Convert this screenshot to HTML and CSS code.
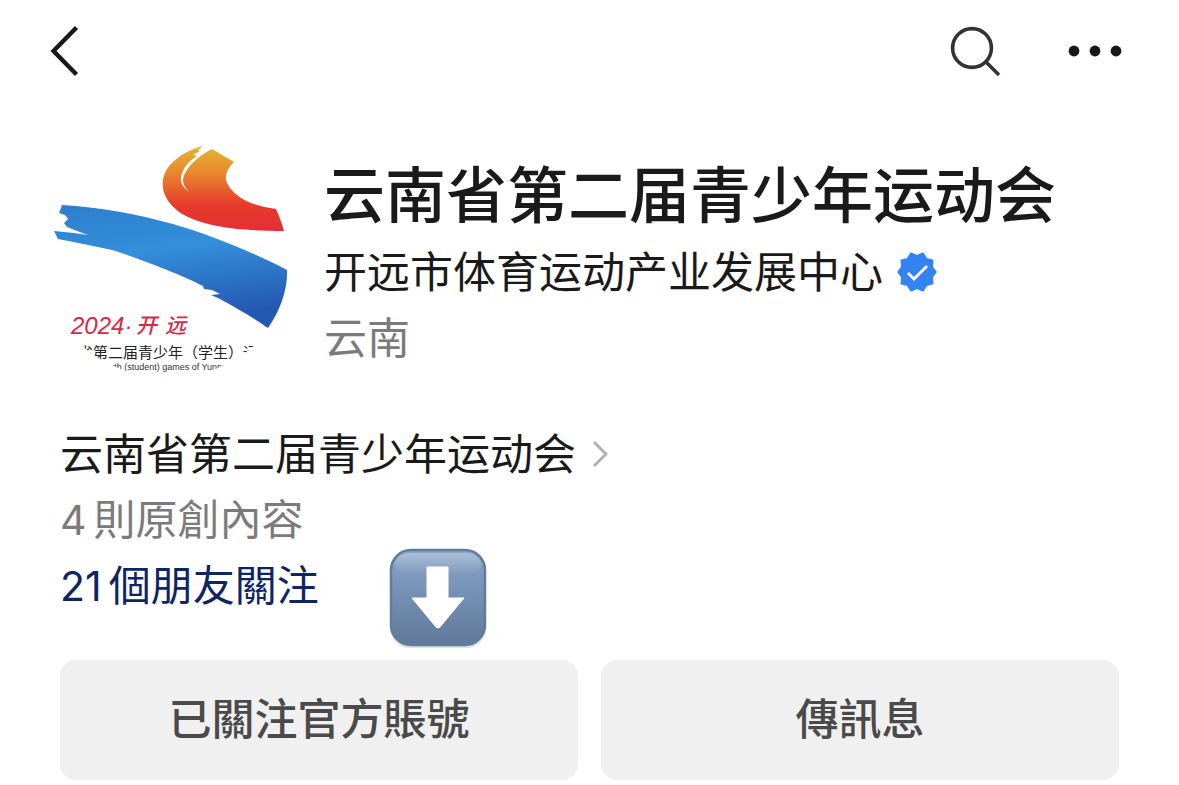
FILE: index.html
```html
<!DOCTYPE html>
<html lang="zh">
<head>
    <meta charset="utf-8">
    <meta name="viewport" content="width=device-width, initial-scale=1">
    <title>云南省第二届青少年运动会</title>
    <link rel="stylesheet" href="styles.css">
</head>
<body>
    <!-- 顶部导航 -->
    <header class="nav">
        <button class="icon-btn" type="button" aria-label="返回">
            <svg width="30" height="52" viewBox="0 0 30 52" fill="none" stroke="#181818" stroke-width="4.4">
                <path d="M26.500 2.500 L3.500 26 L26.500 49.500"/>
            </svg>
        </button>
        <div class="nav-actions">
            <button class="icon-btn" type="button" aria-label="搜尋">
                <svg width="52" height="52" viewBox="0 0 52 52" fill="none" stroke="#333" stroke-width="3.6">
                    <circle cx="23" cy="23" r="19.4"/>
                    <path d="M36 36 L50 50"/>
                </svg>
            </button>
            <button class="icon-btn" type="button" aria-label="更多">
                <svg width="54" height="12" viewBox="0 0 54 12" fill="#181818">
                    <circle cx="6" cy="6" r="5.4"/>
                    <circle cx="27" cy="6" r="5.4"/>
                    <circle cx="48" cy="6" r="5.4"/>
                </svg>
            </button>
        </div>
    </header>

    <main>
        <!-- 帳號資料 -->
        <section class="profile">
            <svg class="avatar" viewBox="0 0 240 240" role="img" aria-label="2024 开远">
                <defs>
                    <linearGradient id="flame" x1="0" y1="0" x2="0" y2="1">
                        <stop offset="0" stop-color="#e3b536"/>
                        <stop offset=".3" stop-color="#e98a2c"/>
                        <stop offset=".7" stop-color="#e73a2b"/>
                        <stop offset="1" stop-color="#e52d33"/>
                    </linearGradient>
                    <linearGradient id="river" x1="0" y1="0" x2=".25" y2="1">
                        <stop offset="0" stop-color="#2d7fce"/>
                        <stop offset=".45" stop-color="#348fdb"/>
                        <stop offset="1" stop-color="#2459b2"/>
                    </linearGradient>
                    <clipPath id="round">
                        <circle cx="116" cy="107" r="131"/>
                    </clipPath>
                </defs>
                <path fill="url(#flame)" d="M151 6 C138 9 126 16 118 25 C110 34 109 46 113 55 C122 76 151 91 232 91 C230 83 227 76 224 69 C199 66 179 56 174 40 C173 33 177 27 182 22 L160 9 C144 17 132 30 131 40 C131 45 134 48 137 52 C131 47 128 42 129 37 C131 27 137 21 145 16 L141 15 L148 11 L146 10 Z"/>
                <path fill="url(#river)" d="M10 65 C47 67 84 74 121 84 C155 94 192 108 235 130 C236 149 228 171 216 188 C205 180 188 170 168 159 L159 155 L168 154 L160 150 L152 149 L151 146 C130 135 86 118 60 110 C43 106 25 103 6 99 L2 91 L22 93 L36 95 L25 91 L15 87 L12 83 L16 79 L13 75 L7 73 Z"/>
                <g class="logo-red">
                    <text class="logo-year" x="19" y="194">2024·</text>
                    <text class="logo-city" x="84" y="193">开</text>
                    <text class="logo-city" x="113" y="193">远</text>
                </g>
                <g clip-path="url(#round)">
                    <text class="logo-cn" x="26" y="218">省第二届青少年（学生）运</text>
                    <text class="logo-en" x="47" y="230">Youth (student) games of Yunnan</text>
                </g>
            </svg>
            <div class="profile-text">
                <h1 class="name">云南省第二届青少年运动会</h1>
                <p class="org">
                    <span>开远市体育运动产业发展中心</span>
                    <svg class="text-icon" width="40" height="40" viewBox="-20 -20 40 40" role="img" aria-label="已認證">
                        <path fill="#3384f0" stroke="#3384f0" stroke-width="2" stroke-linejoin="round" d="M0 -16 L6 -18.500 L9.500 -13 L15.500 -11.500 L15 -5 L18.800 0 L15 5 L15.500 11.500 L9.500 13 L6 18.500 L0 16 L-6 18.500 L-9.500 13 L-15.500 11.500 L-15 5 L-18.800 0 L-15 -5 L-15.500 -11.500 L-9.500 -13 L-6 -18.500 Z"/>
                        <path fill="none" stroke="#fff" stroke-width="2.800" d="M-9 1 L-3 7 L10 -6"/>
                    </svg>
                </p>
                <p class="region">云南</p>
            </div>
        </section>

        <section class="info">
            <a class="info-link" href="#account">
                <span>云南省第二届青少年运动会</span>
                <svg class="text-icon" width="16" height="28" viewBox="0 0 16 28" fill="none" stroke="#b2b2b2" stroke-width="3">
                    <path d="M2 2 L14 14 L2 26"/>
                </svg>
            </a>
            <p class="count"><span class="num">4</span>則原創內容</p>
            <div class="friends">
                <a class="friends-link" href="#friends"><span class="num">21</span>個朋友關注</a>
                <!-- 指向關注按鈕的箭頭貼圖 -->
                <svg class="arrow" viewBox="0 0 100 104" role="img" aria-label="向下">
                    <defs>
                        <linearGradient id="key" x1="0" y1="0" x2="0" y2="1">
                            <stop offset="0" stop-color="#88a5c8"/>
                            <stop offset=".25" stop-color="#7d99bd"/>
                            <stop offset="1" stop-color="#61799a"/>
                        </linearGradient>
                        <linearGradient id="shine" x1="0" y1="0" x2="0" y2="1">
                            <stop offset="0" stop-color="#fff" stop-opacity=".3"/>
                            <stop offset="1" stop-color="#fff" stop-opacity="0"/>
                        </linearGradient>
                    </defs>
                    <rect x="2" y="6" width="96" height="96" rx="20" fill="#dde2e8"/>
                    <rect x="3" y="4" width="94" height="95" rx="20" fill="url(#key)" stroke="#637c9a" stroke-width="2.500"/>
                    <rect x="7" y="7" width="86" height="22" rx="15" fill="url(#shine)"/>
                    <path fill="#fff" stroke="#fff" stroke-linejoin="round" d="M39 21 H60 V52 H76 L52 81 Q50 83 48 81 L24 52 H39 Z"/>
                </svg>
            </div>
        </section>

        <div class="actions">
            <button class="action-btn" type="button">已關注官方賬號</button>
            <button class="action-btn" type="button">傳訊息</button>
        </div>
    </main>
</body>
</html>
```
FILE: styles.css
```css
* {
    box-sizing: border-box;
}
body {
    margin: 0;
    background: #fff;
    color: #1a1a1a;
    font-family: "Noto Sans CJK SC", "Noto Sans CJK TC", sans-serif;
    font-size: 43px;
    line-height: 66px;
}
h1, p {
    margin: 0;
}
a {
    text-decoration: none;
}
svg {
    display: block;
    flex: none;
}
.nav {
    display: flex;
    align-items: center;
    justify-content: space-between;
    height: 102px;
    padding: 0 57px 0 50px;
}
.nav-actions {
    display: flex;
    align-items: center;
    gap: 67px;
}
.icon-btn {
    padding: 0;
    border: 0;
    background: none;
}
.profile {
    display: flex;
    gap: 32px;
    padding: 38px 52px 0;
}
.avatar {
    width: 240px;
    height: 240px;
}
.logo-red {
    fill: #d8284a;
    font-style: italic;
}
.logo-year {
    font-family: "Liberation Sans", sans-serif;
    font-size: 24px;
}
.logo-city {
    font-size: 21px;
    font-weight: 500;
}
.logo-cn {
    font-size: 15px;
    fill: #222;
}
.logo-en {
    font-family: "Liberation Sans", sans-serif;
    font-size: 9px;
    fill: #333;
}
.profile-text {
    padding-top: 16px;
}
.name {
    margin-bottom: 8px;
    font-size: 61px;
    font-weight: 500;
    line-height: 72px;
}
.org {
    display: flex;
    align-items: center;
    gap: 14px;
}
/* 圖示與文字視覺置中 */
.text-icon {
    margin-top: 6px;
}
.region, .count {
    color: #7b7b7b;
}
.info {
    padding: 38px 60px 0;
}
.info-link {
    display: flex;
    align-items: center;
    gap: 16px;
    color: #1a1a1a;
}
.count, .friends, .action-btn {
    font-family: "Noto Sans CJK TC", "Noto Sans CJK SC", sans-serif;
}
.count, .friends {
    font-size: 42px;
}
.num {
    margin-right: 7px;
    font-family: Inter, sans-serif;
    font-size: 41px;
    line-height: 1;
}
.friends {
    position: relative;
}
.friends-link {
    color: #0f2464;
}
.arrow {
    position: absolute;
    top: -4px;
    left: 328px;
    width: 100px;
    height: 104px;
}
.actions {
    display: grid;
    grid-template-columns: 1fr 1fr;
    gap: 23px;
    padding: 44px 60px 5px;
}
.action-btn {
    height: 120px;
    padding: 0 0 8px;
    border: 0;
    border-radius: 16px;
    background: #f0f0f0;
    color: #4a4a4a;
    font-size: 43px;
    font-weight: 500;
}
```
